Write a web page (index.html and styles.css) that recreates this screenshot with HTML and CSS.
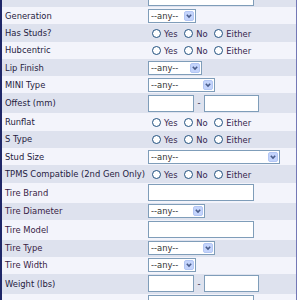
FILE: index.html
```html
<!DOCTYPE html>
<html lang="en">
<head>
    <meta charset="UTF-8">
    <title>Search</title>
    <link rel="stylesheet" href="styles.css">
</head>
<body>
    <div class="panel">
        <table class="search">
            <tr class="txt">
                <td class="lbl"></td>
                <td><input type="text" class="w106"></td>
            </tr>
            <tr class="sel">
                <td class="lbl">Generation</td>
                <td><select class="w48"><option>--any--</option></select></td>
            </tr>
            <tr class="rad">
                <td class="lbl">Has Studs?</td>
                <td>
                    <input type="radio" name="studs"><label>Yes</label>
                    <input type="radio" name="studs"><label>No</label>
                    <input type="radio" name="studs"><label>Either</label>
                </td>
            </tr>
            <tr class="rad">
                <td class="lbl">Hubcentric</td>
                <td>
                    <input type="radio" name="hub"><label>Yes</label>
                    <input type="radio" name="hub"><label>No</label>
                    <input type="radio" name="hub"><label>Either</label>
                </td>
            </tr>
            <tr class="sel">
                <td class="lbl">Lip Finish</td>
                <td><select class="w54"><option>--any--</option></select></td>
            </tr>
            <tr class="sel">
                <td class="lbl">MINI Type</td>
                <td><select class="w67"><option>--any--</option></select></td>
            </tr>
            <tr class="txt">
                <td class="lbl">Offest (mm)</td>
                <td><input type="text" class="w46"><span class="dash">-</span><input type="text" class="w55"></td>
            </tr>
            <tr class="rad">
                <td class="lbl">Runflat</td>
                <td>
                    <input type="radio" name="runflat"><label>Yes</label>
                    <input type="radio" name="runflat"><label>No</label>
                    <input type="radio" name="runflat"><label>Either</label>
                </td>
            </tr>
            <tr class="rad">
                <td class="lbl">S Type</td>
                <td>
                    <input type="radio" name="stype"><label>Yes</label>
                    <input type="radio" name="stype"><label>No</label>
                    <input type="radio" name="stype"><label>Either</label>
                </td>
            </tr>
            <tr class="sel">
                <td class="lbl">Stud Size</td>
                <td><select class="w132"><option>--any--</option></select></td>
            </tr>
            <tr class="rad">
                <td class="lbl">TPMS Compatible (2nd Gen Only)</td>
                <td>
                    <input type="radio" name="tpms"><label>Yes</label>
                    <input type="radio" name="tpms"><label>No</label>
                    <input type="radio" name="tpms"><label>Either</label>
                </td>
            </tr>
            <tr class="txt">
                <td class="lbl tire">Tire Brand</td>
                <td><input type="text" class="w106"></td>
            </tr>
            <tr class="sel">
                <td class="lbl tire">Tire Diameter</td>
                <td><select class="w57"><option>--any--</option></select></td>
            </tr>
            <tr class="txt">
                <td class="lbl tire">Tire Model</td>
                <td><input type="text" class="w106"></td>
            </tr>
            <tr class="sel">
                <td class="lbl tire">Tire Type</td>
                <td><select class="w67"><option>--any--</option></select></td>
            </tr>
            <tr class="sel">
                <td class="lbl tire">Tire Width</td>
                <td><select class="w48"><option>--any--</option></select></td>
            </tr>
            <tr class="txt">
                <td class="lbl">Weight (lbs)</td>
                <td><input type="text" class="w46"><span class="dash">-</span><input type="text" class="w55"></td>
            </tr>
            <tr class="txt">
                <td class="lbl">Wheel Diameter</td>
                <td><input type="text" class="w106"></td>
            </tr>
        </table>
    </div>
</body>
</html>
```

FILE: styles.css
```css
body {
    margin: 0;
    background: #fff;
    font-family: "DejaVu Sans", Verdana, sans-serif;
    font-size: 8.4px;
    color: #1f2140;
}
.panel {
    width: 294px;
    margin-top: -13px;
    border-left: 2px solid #1f2768;
    border-right: 1px solid #7378b6;
}
.search {
    width: 294px;
    border-collapse: collapse;
    border-spacing: 0;
}
.search td {
    padding: 0;
    vertical-align: middle;
    white-space: nowrap;
}
.search tr:nth-child(odd) {
    background: #dee2ee;
}
.search tr:nth-child(even) {
    background: #f3f4fb;
}
.search tr.sel td { height: 17px; }
.search tr.rad td { height: 17.5px; }
.search tr.txt td { height: 20px; }
.search td.lbl {
    width: 143px;
    padding-left: 3px;
}
.search td.tire {
    color: #381c44;
}

input[type=text] {
    box-sizing: border-box;
    height: 17px;
    margin: 0;
    padding: 0 2px;
    border: 1px solid #7f9db9;
    background: #fff;
    vertical-align: middle;
}
.dash {
    display: inline-block;
    width: 10px;
    text-align: center;
    vertical-align: middle;
}

select {
    appearance: none;
    -webkit-appearance: none;
    box-sizing: border-box;
    height: 14px;
    margin: 0;
    padding: 0 0 0 2px;
    border: 1px solid #7f9db9;
    border-radius: 0;
    font-family: "DejaVu Sans", Verdana, sans-serif;
    font-size: 8.4px;
    line-height: 12px;
    color: #333;
    vertical-align: middle;
    background: #fff url("data:image/svg+xml,%3Csvg xmlns='http://www.w3.org/2000/svg' width='10' height='10'%3E%3Crect x='0.5' y='0.5' width='9' height='9' rx='1.5' fill='%23c4d4fc' stroke='%23b3c6f4'/%3E%3Cpath d='M2.8 3.8l2.2 2.2 2.2-2.2' stroke='%234a5d8a' stroke-width='1.6' fill='none'/%3E%3C/svg%3E") no-repeat right 1px center;
}

input[type=radio] {
    appearance: none;
    -webkit-appearance: none;
    width: 9px;
    height: 9px;
    margin: 0 3px 0 4px;
    border: 1px solid #20507f;
    border-radius: 50%;
    background: #fff;
    vertical-align: middle;
}
.search label {
    vertical-align: middle;
    color: #351f4d;
}

.w46 { width: 46px; }
.w48 { width: 48px; }
.w54 { width: 54px; }
.w55 { width: 55px; }
.w57 { width: 57px; }
.w67 { width: 67px; }
.w106 { width: 106px; }
.w132 { width: 132px; }
```
